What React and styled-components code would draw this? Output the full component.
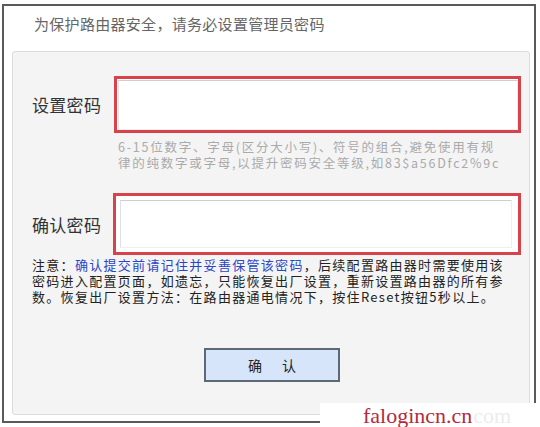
import React from "react";
import styled, { createGlobalStyle } from "styled-components";

const Global = createGlobalStyle`
  html, body { margin: 0; padding: 0; background: #fff; }
  body { font-family: "Noto Sans CJK SC", "Liberation Sans", sans-serif; }
  * { box-sizing: border-box; }
`;

const Page = styled.div`
  position: relative;
  width: 540px;
  height: 427px;
  overflow: hidden;
  background: #fff;
  padding: 4px 4px 0 2px;
`;

const Frame = styled.div`
  width: 534px;
  height: 419px;
  border: 2px solid #5a5a5a;
  display: flex;
  flex-direction: column;
`;

const Header = styled.div`
  height: 45px;
  padding: 8px 0 0 30px;
  font-size: 15px;
  line-height: 20px;
  color: #666;
  letter-spacing: 0.3px;
`;

const Panel = styled.div`
  margin: 0 4px 6px 8px;
  flex: 1;
  background: #f4f4f4;
  border: 1px solid #dcdcdc;
  border-radius: 3px;
  padding: 24px 8px 0 19px;
  display: flex;
  flex-direction: column;
`;

const Row = styled.div`
  display: flex;
  align-items: center;
  margin-top: ${(p) => p.$top || 0}px;
`;

const Label = styled.div`
  width: ${(p) => p.$w}px;
  font-size: 17px;
  color: #333;
  letter-spacing: 0.3px;
`;

const RedBox = styled.div`
  width: 408px;
  height: ${(p) => p.$h}px;
  border: 3px solid #d8434b;
  padding: ${(p) => p.$pad};
  background: #fff;
`;

const Input = styled.div`
  width: 100%;
  height: 100%;
  background: #fff;
  border-top: 1px solid #c8d0d4;
  border-left: 1px solid #dde2e4;
  border-right: 1px solid #eef0f0;
  border-bottom: 1px solid #eef0f0;
`;

const Hint = styled.div`
  margin: 6px 0 0 86px;
  font-size: 12.5px;
  line-height: 16px;
  color: #aaa;
  letter-spacing: 1.75px;
  white-space: nowrap;
`;

const Notice = styled.div`
  margin-top: 2px;
  font-size: 13px;
  line-height: 16px;
  color: #222;
  letter-spacing: 1.3px;
  white-space: nowrap;
`;

const Blue = styled.span`
  color: #2a45c8;
`;

const Button = styled.div`
  margin: 43px 0 0 172px;
  width: 136px;
  height: 34px;
  background: #d6e5fa;
  border: 2px solid #5d6a76;
  display: flex;
  align-items: center;
  justify-content: center;
  font-size: 14px;
  color: #222;
  letter-spacing: 20px;
  padding-left: 20px;
`;

const Watermark = styled.div`
  position: absolute;
  left: 320px;
  top: 403px;
  width: 220px;
  height: 24px;
  background: #fff;
  padding-left: 43px;
  font-family: "Liberation Serif", serif;
  font-size: 22px;
  line-height: 25px;
  color: #b52a3c;
  white-space: nowrap;
`;

const Faint = styled.span`
  color: #ececec;
  margin-left: 1px;
`;

export default function App() {
  return (
    <Page>
      <Global />
      <Frame>
        <Header>为保护路由器安全，请务必设置管理员密码</Header>
        <Panel>
          <Row>
            <Label $w={82}>设置密码</Label>
            <RedBox $h={57} $pad="1px 0 0 1px">
              <Input />
            </RedBox>
          </Row>
          <Hint>
            6-15位数字、字母(区分大小写)、符号的组合,避免使用有规
            <br />
            律的纯数字或字母,以提升密码安全等级,如83$a56Dfc2%9c
          </Hint>
          <Row $top={22}>
            <Label $w={81}>确认密码</Label>
            <RedBox $h={62} $pad="4px 6px 4px 4px">
              <Input />
            </RedBox>
          </Row>
          <Notice>
            注意：<Blue>确认提交前请记住并妥善保管该密码</Blue>，后续配置路由器时需要使用该
            <br />
            密码进入配置页面，如遗忘，只能恢复出厂设置，重新设置路由器的所有参
            <br />
            数。恢复出厂设置方法：在路由器通电情况下，按住Reset按钮5秒以上。
          </Notice>
          <Button>确认</Button>
        </Panel>
      </Frame>
      <Watermark>
        falogincn.cn<Faint>com</Faint>
      </Watermark>
    </Page>
  );
}
